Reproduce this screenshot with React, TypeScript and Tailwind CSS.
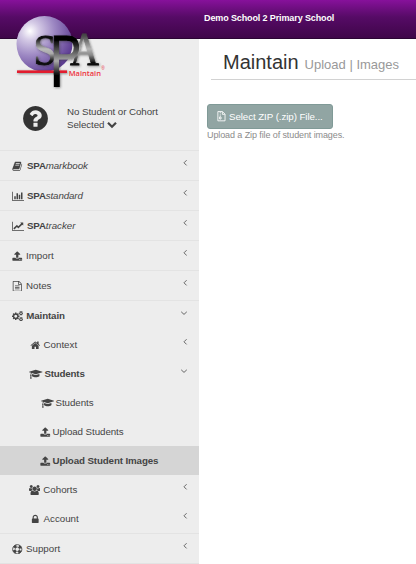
import React from 'react';

const PATHS = {
  upload: [1792, 'M1344 1472q0-26-19-45t-45-19-45 19-19 45 19 45 45 19 45-19 19-45zm256 0q0-26-19-45t-45-19-45 19-19 45 19 45 45 19 45-19 19-45zm128-224v320q0 40-28 68t-68 28h-1472q-40 0-68-28t-28-68v-320q0-40 28-68t68-28h427q21 56 70.5 92t110.5 36h256q61 0 110.5-36t70.5-92h427q40 0 68 28t28 68zm-325-648q-17 40-59 40h-256v448q0 26-19 45t-45 19h-256q-26 0-45-19t-19-45v-448h-256q-42 0-59-40-17-39 14-69l448-448q18-19 45-19t45 19l448 448q31 30 14 69z'],
  bars: [2048, 'M640 896v512h-256v-512h256zm384-512v1024h-256v-1024h256zm1024 1152v128h-2048v-1536h128v1408h1920zm-640-896v768h-256v-768h256zm384-384v1152h-256v-1152h256z'],
  line: [2048, 'M2048 1536v128h-2048v-1536h128v1408h1920zm-128-1248v435q0 21-19.5 29.5t-35.5-7.5l-121-121-633 633q-10 10-23 10t-23-10l-233-233-416 416-192-192 585-585q10-10 23-10t23 10l233 233 464-464-121-121q-16-16-7.5-35.5t29.5-19.5h435q14 0 23 9t9 23z'],
  question: [1792, 'M1024 1376v-192q0-14-9-23t-23-9h-192q-14 0-23 9t-9 23v192q0 14 9 23t23 9h192q14 0 23-9t9-23zm256-672q0-88-55.5-163t-138.5-116-170-41q-243 0-371 213-15 24 8 42l132 100q7 6 19 6 16 0 25-12 53-68 86-92 34-24 86-24 48 0 85.5 26t37.5 59q0 38-20 61t-68 45q-63 28-115.5 86.5t-52.5 125.5v36q0 14 9 23t23 9h192q14 0 23-9t9-23q0-19 21.5-49.5t54.5-49.5q32-18 49-28.5t46-35 44.5-48 28-60.5 12.5-81zm384 192q0 209-103 385.5t-279.5 279.5-385.5 103-385.5-103-279.5-279.5-103-385.5 103-385.5 279.5-279.5 385.5-103 385.5 103 279.5 279.5 103 385.5z'],
  home: [1792, 'M1472 992v480q0 26-19 45t-45 19h-384v-384h-256v384h-384q-26 0-45-19t-19-45v-480q0-1 .5-3t.5-3l575-474 575 474q1 2 1 6zm223-69l-62 74q-8 9-21 11h-3q-13 0-21-7l-692-577-692 577q-12 8-24 7-13-2-21-11l-62-74q-8-10-7-23.5t11-21.5l719-599q32-26 76-26t76 26l244 204v-195q0-14 9-23t23-9h192q14 0 23 9t9 23v408l219 182q10 8 11 21.5t-7 23.5z'],
  cap: [2304, 'M1774 836l18 316q4 69-82 128t-235 93.5-323 34.5-323-34.5-235-93.5-82-128l18-316 574 181q22 7 48 7t48-7zm530-324q0 23-22 31l-1120 352q-4 1-10 1t-10-1l-652-206q-43 34-71 111.5t-34 178.5q63 36 63 109 0 69-58 107l58 433q2 14-8 25-9 11-24 11h-192q-15 0-24-11-10-11-8-25l58-433q-58-38-58-107 0-73 65-111 11-207 98-330l-333-104q-22-8-22-31t22-31l1120-352q4-1 10-1t10 1l1120 352q22 8 22 31z'],
  lock: [1792, 'M640 768h512v-192q0-106-75-181t-181-75-181 75-75 181v192zm832 96v576q0 40-28 68t-68 28h-960q-40 0-68-28t-28-68v-576q0-40 28-68t68-28h32v-192q0-184 132-316t316-132 316 132 132 316v192h32q40 0 68 28t28 68z'],
  book: [1792, 'M1703 478q40 57 18 129l-275 906q-19 64-76.5 107.5t-122.5 43.5h-923q-77 0-148.5-53.5t-99.5-131.5q-24-67-2-127 0-4 3-27t4-37q1-8-3-21.5t-3-19.5q2-11 8-21t16.5-23.5 16.5-23.5q23-38 45-91.5t30-91.5q3-10 .5-30t-.5-28q3-11 17-28t17-23q21-36 42-92t25-90q1-9-2.5-32t.5-28q4-13 22-30.5t22-22.5q19-26 42.5-84.5t27.5-96.5q1-8-3-25.5t-2-26.5q2-8 9-18t18-23 17-21q8-12 16.5-30.5t15-35 16-36 19.5-32 26.5-23.5 36-11.5 47.5 5.5l-1 3q38-9 51-9h761q74 0 114 56t18 130l-274 906q-36 119-71.5 153.5t-128.5 34.5h-869q-27 0-38 15-11 16-1 43 24 70 144 70h923q29 0 56-15.5t35-41.5l300-987q7-22 5-57 38 15 59 43zm-1064 2q-4 13 2 22.5t20 9.5h608q13 0 25.5-9.5t16.5-22.5l21-64q4-13-2-22.5t-20-9.5h-608q-13 0-25.5 9.5t-16.5 22.5zm-83 256q-4 13 2 22.5t20 9.5h608q13 0 25.5-9.5t16.5-22.5l21-64q4-13-2-22.5t-20-9.5h-608q-13 0-25.5 9.5t-16.5 22.5z'],
  file: [1792, 'M1596 380q28 28 48 76t20 88v1152q0 40-28 68t-68 28h-1344q-40 0-68-28t-28-68v-1600q0-40 28-68t68-28h896q40 0 88 20t76 48zm-444-244v376h376q-10-29-22-41l-313-313q-12-12-41-22zm384 1528v-1024h-416q-40 0-68-28t-28-68v-416h-768v1536h1280zm-1024-864q0-14 9-23t23-9h704q14 0 23 9t9 23v64q0 14-9 23t-23 9h-704q-14 0-23-9t-9-23v-64zm736 224q14 0 23 9t9 23v64q0 14-9 23t-23 9h-704q-14 0-23-9t-9-23v-64q0-14 9-23t23-9h704zm0 256q14 0 23 9t9 23v64q0 14-9 23t-23 9h-704q-14 0-23-9t-9-23v-64q0-14 9-23t23-9h704z'],
  users: [1920, 'M593 896q-162 5-265 128h-134q-82 0-138-40.5t-56-118.5q0-353 124-353 6 0 43.5 21t97.5 42.5 119 21.5q67 0 133-23-5 37-5 66 0 139 81 256zm1071 637q0 120-73 189.5t-194 69.5h-874q-121 0-194-69.5t-73-189.5q0-53 3.5-103.5t14-109 26.5-108.5 43-97.5 62-81 85.5-53.5 111.5-20q10 0 43 21.5t73 48 107 48 135 21.5 135-21.5 107-48 73-48 43-21.5q61 0 111.5 20t85.5 53.5 62 81 43 97.5 26.5 108.5 14 109 3.5 103.5zm-1024-1277q0 106-75 181t-181 75-181-75-75-181 75-181 181-75 181 75 75 181zm704 384q0 159-112.5 271.5t-271.5 112.5-271.5-112.5-112.5-271.5 112.5-271.5 271.5-112.5 271.5 112.5 112.5 271.5zm576 225q0 78-56 118.5t-138 40.5h-134q-103-123-265-128 81-117 81-256 0-29-5-66 66 23 133 23 59 0 119-21.5t97.5-42.5 43.5-21q124 0 124 353zm-128-609q0 106-75 181t-181 75-181-75-75-181 75-181 181-75 181 75 75 181z'],
  cogs: [1920, 'M896 896q0-106-75-181t-181-75-181 75-75 181 75 181 181 75 181-75 75-181zm768 512q0-52-38-90t-90-38-90 38-38 90q0 53 37.5 90.5t90.5 37.5 90.5-37.5 37.5-90.5zm0-1024q0-52-38-90t-90-38-90 38-38 90q0 53 37.5 90.5t90.5 37.5 90.5-37.5 37.5-90.5zm-384 421v185q0 10-7 19.5t-16 10.5l-155 24q-11 35-32 76 34 48 90 115 7 11 7 20 0 12-7 19-23 30-82.5 89.5t-78.5 59.5q-11 0-21-7l-115-90q-37 19-77 31-11 108-23 155-7 24-30 24h-186q-11 0-20-7.5t-10-17.5l-23-153q-34-10-75-31l-118 89q-7 7-20 7-11 0-21-8-144-133-144-160 0-9 7-19 10-14 41-53t47-61q-23-44-35-82l-152-24q-10-1-17-9.5t-7-19.5v-185q0-10 7-19.5t16-10.5l155-24q11-35 32-76-34-48-90-115-7-11-7-20 0-12 7-20 22-30 82-89t79-59q11 0 21 7l115 90q34-18 77-32 11-108 23-154 7-24 30-24h186q11 0 20 7.5t10 17.5l23 153q34 10 75 31l118-89q8-7 20-7 11 0 21 8 144 133 144 160 0 8-7 19-12 16-42 54t-45 60q23 48 34 82l152 23q10 2 17 10.5t7 19.5zm640 533v140q0 16-149 31-12 27-30 52 51 113 51 138 0 4-4 7-122 71-124 71-8 0-46-47t-52-68q-20 2-30 2t-30-2q-14 21-52 68t-46 47q-2 0-124-71-4-3-4-7 0-25 51-138-18-25-30-52-149-15-149-31v-140q0-16 149-31 13-29 30-52-51-113-51-138 0-4 4-7 4-2 35-20t59-34 30-16q8 0 46 46.5t52 67.5q20-2 30-2t30 2q51-71 92-112l6-2q4 0 124 70 4 3 4 7 0 25-51 138 17 23 30 52 149 15 149 31zm0-1024v140q0 16-149 31-12 27-30 52 51 113 51 138 0 4-4 7-122 71-124 71-8 0-46-47t-52-68q-20 2-30 2t-30-2q-14 21-52 68t-46 47q-2 0-124-71-4-3-4-7 0-25 51-138-18-25-30-52-149-15-149-31v-140q0-16 149-31 13-29 30-52-51-113-51-138 0-4 4-7 4-2 35-20t59-34 30-16q8 0 46 46.5t52 67.5q20-2 30-2t30 2q51-71 92-112l6-2q4 0 124 70 4 3 4 7 0 25-51 138 17 23 30 52 149 15 149 31z'],
} as const;

function Glyph({ name, className }: { name: keyof typeof PATHS; className: string }) {
  const [w, d] = PATHS[name];
  return (
    <svg viewBox={`0 0 ${w} 1792`} className={`shrink-0 ${className}`} fill="currentColor">
      <path d={d} />
    </svg>
  );
}

function LifeRing() {
  return (
    <svg viewBox="0 0 20 20" className="mr-[3.5px] size-[10.5px] shrink-0" fill="none" stroke="currentColor">
      <circle cx="10" cy="10" r="8.8" strokeWidth="1.6" />
      <circle cx="10" cy="10" r="4.2" strokeWidth="1.4" />
      <circle cx="10" cy="10" r="6.5" strokeWidth="5" strokeDasharray="5.4 4.81" strokeDashoffset="-2.4" />
    </svg>
  );
}

function Arrow({ open }: { open?: boolean }) {
  return (
    <svg viewBox="0 0 8 8" className="mb-[7px] ml-auto mr-[11px] size-2 shrink-0" fill="none" stroke="#666" strokeWidth="1">
      <path d={open ? 'M1.2 2.8 4 5.4 6.8 2.8' : 'M6.6 1.2 4 3.8 6.6 6.4'} />
    </svg>
  );
}

interface RowProps {
  icon: React.ReactNode;
  children: React.ReactNode;
  className?: string;
  arrow?: 'left' | 'down';
}

function TopRow({ icon, children, className = '', arrow = 'left' }: RowProps) {
  return (
    <div className={`flex h-[30px] shrink-0 items-center border-t border-[#e3e3e3] pl-3 pt-px ${className}`}>
      {icon}
      {children}
      <Arrow open={arrow === 'down'} />
    </div>
  );
}

function SubRow({ icon, children, className = '', arrow }: RowProps) {
  return (
    <div className={`flex h-[29px] shrink-0 items-center pt-px ${className}`}>
      {icon}
      {children}
      {arrow && <Arrow open={arrow === 'down'} />}
    </div>
  );
}

function Logo() {
  return (
    <svg viewBox="0 0 100 80" className="absolute left-[10px] top-[15px] h-20 w-[100px]">
      <defs>
        <radialGradient id="ball" cx="0.24" cy="0.27" r="0.8">
          <stop offset="0" stopColor="#fff" />
          <stop offset="0.2" stopColor="#d5cbe6" />
          <stop offset="0.55" stopColor="#9d88c3" />
          <stop offset="1" stopColor="#5f3f94" />
        </radialGradient>
        <linearGradient id="sFill" gradientUnits="userSpaceOnUse" x1="0" y1="20" x2="0" y2="51">
          <stop offset="0.1" stopColor="#0a0a0a" />
          <stop offset="0.45" stopColor="#bbb" />
          <stop offset="0.6" stopColor="#aaa" />
          <stop offset="0.85" stopColor="#0a0a0a" />
        </linearGradient>
        <linearGradient id="pFill" gradientUnits="userSpaceOnUse" x1="0" y1="20" x2="0" y2="72">
          <stop offset="0.1" stopColor="#000" />
          <stop offset="0.38" stopColor="#777" />
          <stop offset="0.5" stopColor="#aaa" />
          <stop offset="0.78" stopColor="#000" />
        </linearGradient>
        <linearGradient id="aFill" gradientUnits="userSpaceOnUse" x1="0" y1="20" x2="0" y2="51">
          <stop offset="0" stopColor="#444" />
          <stop offset="0.45" stopColor="#b5b5b5" />
          <stop offset="0.65" stopColor="#888" />
          <stop offset="0.9" stopColor="#0a0a0a" />
        </linearGradient>
        <filter id="shade" x="-20%" y="-20%" width="150%" height="150%">
          <feDropShadow dx="0.8" dy="0.8" stdDeviation="0.9" floodColor="#333" floodOpacity="0.55" />
        </filter>
      </defs>
      <circle cx="34.5" cy="29" r="28" fill="url(#ball)" />
      <g filter="url(#shade)" className="font-['Liberation_Serif',serif]">
        <rect x="7" y="55.4" width="50" height="2.6" fill="#e21f2d" />
        <text x="23.5" y="50" fontSize="45" textLength="23" lengthAdjust="spacingAndGlyphs" fill="url(#sFill)" stroke="url(#sFill)" strokeWidth="0.8">S</text>
        <text x="60" y="50" fontSize="47" textLength="29" lengthAdjust="spacingAndGlyphs" fill="url(#aFill)" stroke="url(#aFill)" strokeWidth="0.8">A</text>
        <text x="40.6" y="58.5" fontSize="55" textLength="30.5" lengthAdjust="spacingAndGlyphs" fill="url(#pFill)" stroke="url(#pFill)" strokeWidth="1.2" className="font-['Liberation_Sans',sans-serif]">P</text>
        <rect x="43.8" y="56" width="6" height="16" fill="url(#pFill)" />
      </g>
      <text x="58.7" y="60.5" fontSize="7.4" textLength="32.3" lengthAdjust="spacingAndGlyphs" fontWeight="600" fill="#ee3340" className="font-['Open_Sans',sans-serif]">Maintain</text>
      <text x="91.2" y="54.8" fontSize="4.8" fill="#e8303b" className="font-['Liberation_Sans',sans-serif]">®</text>
    </svg>
  );
}

export default function App() {
  return (
    <div className="relative flex h-[564px] w-[416px] flex-col overflow-hidden bg-white font-['Liberation_Sans',Arial,sans-serif] text-[9.75px] text-[#444]">
      <header className="h-[39px] shrink-0 border-b border-[#2b0433] bg-linear-to-b from-[#87119b] via-[#560b66] via-45% to-[#3f0649] pl-[204px] pt-[12px]">
        <div className="whitespace-nowrap text-[9px] font-bold leading-[13px] tracking-[-0.12px] text-white">Demo School 2 Primary School</div>
      </header>
      <div className="flex min-h-0 flex-1">
        <aside className="flex w-[199px] shrink-0 flex-col bg-[#ededed]">
          <div className="flex h-[111px] shrink-0 items-start">
            <Glyph name="question" className="ml-[21px] mt-[65px] size-[29px] text-[#333]" />
            <div className="ml-[17px] mt-[66px] whitespace-nowrap leading-[13px] tracking-[-0.06px]">
              <div>No Student or Cohort</div>
              <div className="flex items-center">
                <span>Selected</span>
                <svg viewBox="0 0 10 8" className="ml-[3px] h-2 w-2.5" fill="none" stroke="currentColor" strokeWidth="2.2">
                  <path d="M1 1.8 5 5.8 9 1.8" />
                </svg>
              </div>
            </div>
          </div>
          <TopRow icon={<Glyph name="book" className="mr-[4.5px] size-[10.5px]" />}>
            <b className="tracking-[-0.2px]">SPA</b><i className="tracking-[-0.1px]">markbook</i>
          </TopRow>
          <TopRow icon={<Glyph name="bars" className="mr-[3px] h-[10.5px] w-3" />}>
            <b className="tracking-[-0.2px]">SPA</b><i className="tracking-[-0.12px]">standard</i>
          </TopRow>
          <TopRow icon={<Glyph name="line" className="mr-[3px] h-[10.5px] w-3" />}>
            <b className="tracking-[-0.2px]">SPA</b><i>tracker</i>
          </TopRow>
          <TopRow icon={<Glyph name="upload" className="mr-[3.5px] size-[10.5px]" />}>Import</TopRow>
          <TopRow icon={<Glyph name="file" className="mr-[3.5px] size-[10.5px]" />}>Notes</TopRow>
          <TopRow arrow="down" icon={<Glyph name="cogs" className="mr-[3px] h-[10.5px] w-[11.25px]" />}>
            <b className="tracking-[-0.12px]">Maintain</b>
          </TopRow>
          <SubRow className="pl-[30px]" arrow="left" icon={<Glyph name="home" className="mr-[3px] size-[10.5px]" />}>Context</SubRow>
          <SubRow className="pl-[29px]" arrow="down" icon={<Glyph name="cap" className="mr-[2px] h-[10.5px] w-[13.5px]" />}>
            <b className="tracking-[-0.2px]">Students</b>
          </SubRow>
          <SubRow className="pl-[40.5px]" icon={<Glyph name="cap" className="mr-[1.5px] h-[10.5px] w-[13.5px]" />}>
            <span className="tracking-[-0.05px]">Students</span>
          </SubRow>
          <SubRow className="pl-[40px]" icon={<Glyph name="upload" className="mr-[2px] size-[10.5px]" />}>
            <span className="tracking-[-0.07px]">Upload Students</span>
          </SubRow>
          <SubRow className="bg-[#d5d5d5] pl-[40px]" icon={<Glyph name="upload" className="mr-[2px] size-[10.5px]" />}>
            <b className="tracking-[-0.12px]">Upload Student Images</b>
          </SubRow>
          <SubRow className="pl-[29px]" arrow="left" icon={<Glyph name="users" className="mr-[3px] h-[10.5px] w-[11.25px]" />}>Cohorts</SubRow>
          <SubRow className="pl-[30px]" arrow="left" icon={<Glyph name="lock" className="mr-[3px] size-[10.5px]" />}>Account</SubRow>
          <TopRow icon={<LifeRing />}>Support</TopRow>
          <div className="h-px shrink-0 bg-[#e3e3e3]" />
        </aside>
        <main className="flex flex-1 flex-col items-start">
          <h1 className="ml-3 flex h-[41px] w-[205px] shrink-0 items-baseline whitespace-nowrap border-b border-[#d2d2d2] pl-3 pt-[8px] text-[20px] leading-[30px] text-[#333]">
            Maintain
            <small className="ml-[6px] text-[13px] text-[#999]">Upload | Images</small>
          </h1>
          <button className="ml-2 mt-6 flex h-[25px] w-[126px] items-center rounded-[3px] border border-[#809a97] bg-[#91a5a3] pl-[9px] pt-px text-white">
            <svg viewBox="0 0 9 11" className="mb-px mr-[3px] h-[10.5px] w-[9px]" fill="none" stroke="currentColor" strokeWidth="0.9">
              <path d="M.7.6H5.5L8.2 3.3V10.3H.7ZM5.4.8V3.5H8" />
              <path d="M3.2 1V6" strokeDasharray="1 .8" />
              <path d="M2.5 6.2H4V8.4H2.5Z" />
            </svg>
            <span className="whitespace-nowrap tracking-[-0.08px]">Select ZIP (.zip) File...</span>
          </button>
          <p className="ml-2 whitespace-nowrap text-[9px] leading-[12px] tracking-[-0.1px] text-[#8b8b8b]">Upload a Zip file of student images.</p>
        </main>
      </div>
      <Logo />
    </div>
  );
}
